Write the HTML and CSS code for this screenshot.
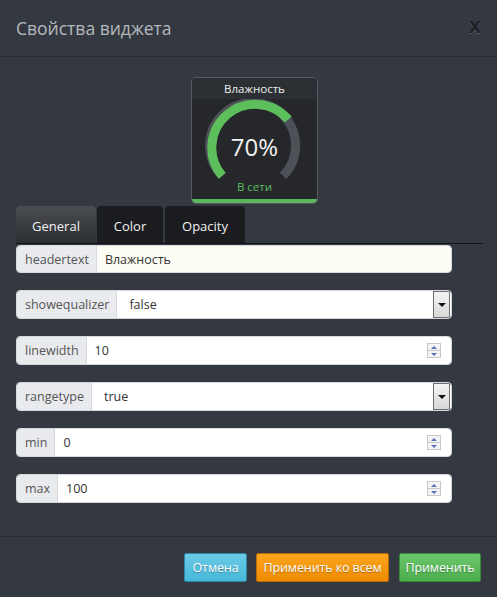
FILE: index.html
```html
<!DOCTYPE html>
<html lang="ru">
<head>
<meta charset="utf-8">
<title>Свойства виджета</title>
<link rel="stylesheet" href="styles.css">
</head>
<body>
<div class="modal">
  <div class="modal-header">
    <h4 class="modal-title">Свойства виджета</h4>
    <span class="close">X</span>
  </div>
  <div class="modal-body">
    <div class="preview">
      <div class="widget">
        <div class="widget-head">Влажность</div>
        <div class="widget-body">
          <svg class="gauge" width="125" height="101" viewBox="0 0 125 101">
            <path d="M 30.2 76.9 A 43 43 0 1 1 91.0 76.9" fill="none" stroke="#4d5056" stroke-width="9"/>
            <path d="M 30.2 76.9 A 43 43 0 1 1 96.3 20.5" fill="none" stroke="#5cbf5c" stroke-width="9"/>
          </svg>
          <div class="gauge-value">70%</div>
          <div class="gauge-status">В сети</div>
        </div>
      </div>
    </div>
    <div class="tabs">
      <div class="tab active tab-general">General</div>
      <div class="tab tab-color">Color</div>
      <div class="tab tab-opacity">Opacity</div>
    </div>
    <div class="form">
      <div class="group first">
        <span class="addon">headertext</span>
        <div class="control text">Влажность</div>
      </div>
      <div class="group">
        <span class="addon">showequalizer</span>
        <div class="control select"><span class="val">false</span><span class="drop"><i></i></span></div>
      </div>
      <div class="group">
        <span class="addon">linewidth</span>
        <div class="control number"><span class="val">10</span><span class="spin"><b class="up"></b><b class="down"></b></span></div>
      </div>
      <div class="group">
        <span class="addon">rangetype</span>
        <div class="control select"><span class="val">true</span><span class="drop"><i></i></span></div>
      </div>
      <div class="group">
        <span class="addon">min</span>
        <div class="control number"><span class="val">0</span><span class="spin"><b class="up"></b><b class="down"></b></span></div>
      </div>
      <div class="group">
        <span class="addon">max</span>
        <div class="control number"><span class="val">100</span><span class="spin"><b class="up"></b><b class="down"></b></span></div>
      </div>
    </div>
  </div>
  <div class="modal-footer">
    <button class="btn btn-info">Отмена</button>
    <button class="btn btn-warning">Применить ко всем</button>
    <button class="btn btn-success">Применить</button>
  </div>
</div>
</body>
</html>
```

FILE: styles.css
```css
html, body {
  margin: 0;
  padding: 0;
  background: #343841;
}
body {
  font-family: "Open Sans", "Noto Sans", sans-serif;
  width: 497px;
  height: 597px;
  overflow: hidden;
}
.modal {
  display: flex;
  flex-direction: column;
  height: 597px;
}
.modal-header {
  height: 56px;
  border-bottom: 1px solid #292c31;
  display: flex;
  align-items: center;
  justify-content: space-between;
  padding: 0 16px;
}
.modal-title {
  margin: 0;
  font-weight: normal;
  font-size: 17.5px;
  color: #b4b8bd;
}
.close {
  font-family: "DejaVu Sans", sans-serif;
  font-weight: bold;
  font-size: 16px;
  color: #1e2024;
  text-shadow: 0 1px 0 #5a5e66;
  margin-top: -2px;
}
.modal-body {
  flex: 1;
  padding: 20px 14px 0 16px;
}
.preview {
  display: flex;
  padding-left: 175px;
}
.widget {
  width: 125px;
  height: 125px;
  border: 1px solid #565a60;
  border-radius: 5px;
  background: #25272b;
  overflow: hidden;
  display: flex;
  flex-direction: column;
}
.widget-head {
  height: 21px;
  line-height: 21px;
  background: #2c2f33;
  color: #f0f0f0;
  font-size: 11.5px;
  text-align: center;
  flex: none;
}
.widget-body {
  position: relative;
  flex: 1;
  border-bottom: 4px solid #5cb85c;
}
.gauge {
  display: block;
  position: absolute;
  left: 0;
  top: 0;
}
.gauge-value {
  position: absolute;
  left: 0;
  right: 0;
  top: 34px;
  text-align: center;
  color: #f2f2f2;
  font-size: 24px;
  line-height: 28px;
}
.gauge-status {
  position: absolute;
  left: 0;
  right: 0;
  top: 80px;
  text-align: center;
  color: #5cbf5c;
  font-size: 11.5px;
  line-height: 16px;
}
.tabs {
  display: flex;
  margin-top: 2px;
  border-bottom: 1px solid #121316;
  height: 37px;
}
.tab {
  height: 37px;
  line-height: 40px;
  text-align: center;
  font-size: 13px;
  color: #f2f2f2;
  background: #1b1c1f;
  border-radius: 4px 4px 0 0;
}
.tab-general { width: 80px; margin-right: 1px; }
.tab-color { width: 66px; margin-right: 2px; }
.tab-opacity { width: 80px; }
.tab.active {
  background: linear-gradient(#4a4d52, #2b2d31);
}
.form {
  width: 436px;
}
.group {
  display: flex;
  height: 29px;
  margin-top: 17px;
  border: 1px solid #d5d8dc;
  border-radius: 4px;
  box-sizing: border-box;
  overflow: hidden;
  font-size: 12.5px;
}
.group.first {
  margin-top: 1px;
  height: 28px;
}
.addon {
  background: #e8eaed;
  color: #555;
  padding: 0 7px 0 8px;
  display: flex;
  align-items: center;
  border-right: 1px solid #d5d8dc;
}
.control {
  flex: 1;
  background: #fff;
  color: #333;
  display: flex;
  align-items: center;
  padding-left: 8px;
}
.control.text {
  background: #fcfcf4;
}
.control.select {
  padding-left: 12px;
  justify-content: space-between;
}
.control.number {
  justify-content: space-between;
}
.drop {
  width: 15px;
  height: 25px;
  margin-right: 1px;
  border: 1px solid #6e6e6e;
  background: linear-gradient(#f4f4f4, #d8d8d8);
  display: flex;
  align-items: center;
  justify-content: center;
}
.drop i {
  width: 0;
  height: 0;
  border-left: 4px solid transparent;
  border-right: 4px solid transparent;
  border-top: 4px solid #111;
}
.spin {
  display: flex;
  flex-direction: column;
  margin-right: 10px;
  border: 1px solid #c8c8c8;
  width: 12px;
}
.spin b {
  height: 6px;
  display: flex;
  align-items: center;
  justify-content: center;
  background: #f4f4f4;
}
.spin b.up { border-bottom: 1px solid #c8c8c8; }
.spin b::after {
  content: "";
  width: 0;
  height: 0;
  border-left: 3px solid transparent;
  border-right: 3px solid transparent;
}
.spin b.up::after { border-bottom: 3px solid #5a6fc0; }
.spin b.down::after { border-top: 3px solid #5a6fc0; }
.modal-footer {
  border-top: 1px solid #2a2d31;
  height: 61px;
  display: flex;
  justify-content: flex-end;
  align-items: flex-start;
  padding: 16px 16px 0 0;
  box-sizing: border-box;
}
.btn {
  height: 29px;
  font-family: "Open Sans", "Noto Sans", sans-serif;
  font-size: 12.5px;
  letter-spacing: -0.1px;
  color: #fff;
  text-shadow: 0 1px 1px rgba(0,0,0,0.3);
  border-radius: 2px;
  padding: 0;
  text-align: center;
  cursor: pointer;
  white-space: nowrap;
}
.btn-info {
  width: 63px;
  margin-right: 9px;
  background: linear-gradient(#6ccbe6, #46b7d9);
  border: 1px solid #2d8aa6;
}
.btn-warning {
  width: 133px;
  margin-right: 10px;
  background: linear-gradient(#fba51f, #ef8b00);
  border: 1px solid #b96a05;
}
.btn-success {
  width: 82px;
  background: linear-gradient(#6bc66b, #4cae4c);
  border: 1px solid #3a8a3a;
}
```
